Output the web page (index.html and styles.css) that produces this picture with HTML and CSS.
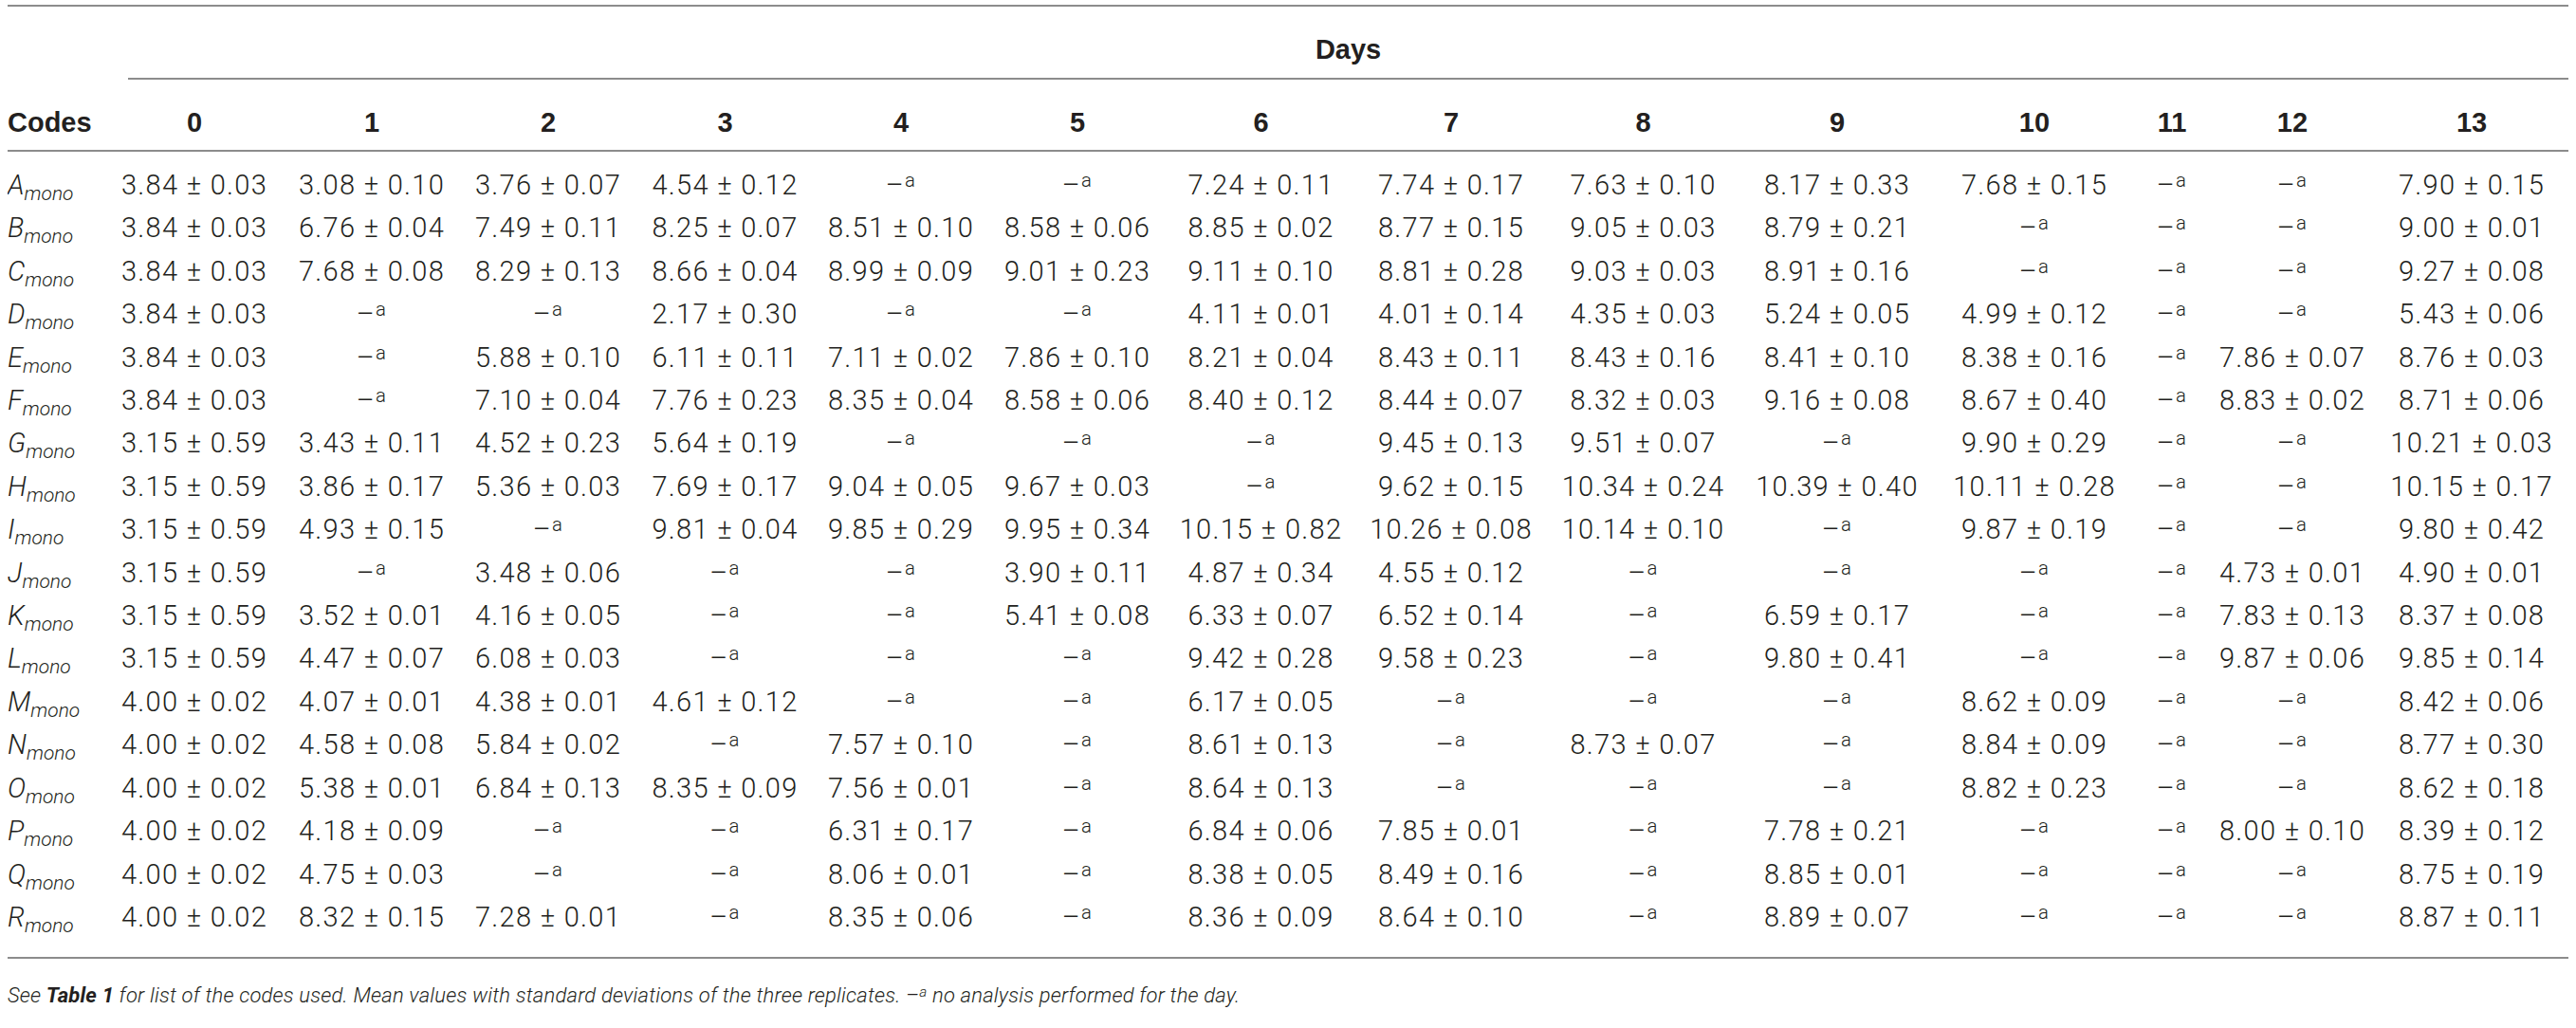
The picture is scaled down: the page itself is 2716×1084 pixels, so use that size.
FILE: index.html
```
<!DOCTYPE html>
<html lang="en">
<head>
    <meta charset="utf-8">
    <title>Mean values by day</title>
    <link rel="stylesheet" href="styles.css">
</head>
<body>
    <table class="data">
        <colgroup>
            <col class="c-code"><col class="c-0"><col class="c-1"><col class="c-2"><col class="c-3"><col class="c-4"><col class="c-5"><col class="c-6"><col class="c-7"><col class="c-8"><col class="c-9"><col class="c-10"><col class="c-11"><col class="c-12"><col class="c-13">
        </colgroup>
        <thead>
            <tr class="group-row">
                <th></th>
                <th colspan="14" class="days"><div>Days</div></th>
            </tr>
            <tr class="head-row">
                <th class="code">Codes</th>
                <th>0</th><th>1</th><th>2</th><th>3</th><th>4</th><th>5</th><th>6</th><th>7</th><th>8</th><th>9</th><th>10</th><th>11</th><th>12</th><th>13</th>
            </tr>
        </thead>
        <tbody>
            <tr>
                <td class="code">A<sub>mono</sub></td>
                <td>3.84 ± 0.03</td><td>3.08 ± 0.10</td><td>3.76 ± 0.07</td><td>4.54 ± 0.12</td><td>–<sup>a</sup></td><td>–<sup>a</sup></td><td>7.24 ± 0.11</td><td>7.74 ± 0.17</td><td>7.63 ± 0.10</td><td>8.17 ± 0.33</td><td>7.68 ± 0.15</td><td>–<sup>a</sup></td><td>–<sup>a</sup></td><td>7.90 ± 0.15</td>
            </tr>
            <tr>
                <td class="code">B<sub>mono</sub></td>
                <td>3.84 ± 0.03</td><td>6.76 ± 0.04</td><td>7.49 ± 0.11</td><td>8.25 ± 0.07</td><td>8.51 ± 0.10</td><td>8.58 ± 0.06</td><td>8.85 ± 0.02</td><td>8.77 ± 0.15</td><td>9.05 ± 0.03</td><td>8.79 ± 0.21</td><td>–<sup>a</sup></td><td>–<sup>a</sup></td><td>–<sup>a</sup></td><td>9.00 ± 0.01</td>
            </tr>
            <tr>
                <td class="code">C<sub>mono</sub></td>
                <td>3.84 ± 0.03</td><td>7.68 ± 0.08</td><td>8.29 ± 0.13</td><td>8.66 ± 0.04</td><td>8.99 ± 0.09</td><td>9.01 ± 0.23</td><td>9.11 ± 0.10</td><td>8.81 ± 0.28</td><td>9.03 ± 0.03</td><td>8.91 ± 0.16</td><td>–<sup>a</sup></td><td>–<sup>a</sup></td><td>–<sup>a</sup></td><td>9.27 ± 0.08</td>
            </tr>
            <tr>
                <td class="code">D<sub>mono</sub></td>
                <td>3.84 ± 0.03</td><td>–<sup>a</sup></td><td>–<sup>a</sup></td><td>2.17 ± 0.30</td><td>–<sup>a</sup></td><td>–<sup>a</sup></td><td>4.11 ± 0.01</td><td>4.01 ± 0.14</td><td>4.35 ± 0.03</td><td>5.24 ± 0.05</td><td>4.99 ± 0.12</td><td>–<sup>a</sup></td><td>–<sup>a</sup></td><td>5.43 ± 0.06</td>
            </tr>
            <tr>
                <td class="code">E<sub>mono</sub></td>
                <td>3.84 ± 0.03</td><td>–<sup>a</sup></td><td>5.88 ± 0.10</td><td>6.11 ± 0.11</td><td>7.11 ± 0.02</td><td>7.86 ± 0.10</td><td>8.21 ± 0.04</td><td>8.43 ± 0.11</td><td>8.43 ± 0.16</td><td>8.41 ± 0.10</td><td>8.38 ± 0.16</td><td>–<sup>a</sup></td><td>7.86 ± 0.07</td><td>8.76 ± 0.03</td>
            </tr>
            <tr>
                <td class="code">F<sub>mono</sub></td>
                <td>3.84 ± 0.03</td><td>–<sup>a</sup></td><td>7.10 ± 0.04</td><td>7.76 ± 0.23</td><td>8.35 ± 0.04</td><td>8.58 ± 0.06</td><td>8.40 ± 0.12</td><td>8.44 ± 0.07</td><td>8.32 ± 0.03</td><td>9.16 ± 0.08</td><td>8.67 ± 0.40</td><td>–<sup>a</sup></td><td>8.83 ± 0.02</td><td>8.71 ± 0.06</td>
            </tr>
            <tr>
                <td class="code">G<sub>mono</sub></td>
                <td>3.15 ± 0.59</td><td>3.43 ± 0.11</td><td>4.52 ± 0.23</td><td>5.64 ± 0.19</td><td>–<sup>a</sup></td><td>–<sup>a</sup></td><td>–<sup>a</sup></td><td>9.45 ± 0.13</td><td>9.51 ± 0.07</td><td>–<sup>a</sup></td><td>9.90 ± 0.29</td><td>–<sup>a</sup></td><td>–<sup>a</sup></td><td>10.21 ± 0.03</td>
            </tr>
            <tr>
                <td class="code">H<sub>mono</sub></td>
                <td>3.15 ± 0.59</td><td>3.86 ± 0.17</td><td>5.36 ± 0.03</td><td>7.69 ± 0.17</td><td>9.04 ± 0.05</td><td>9.67 ± 0.03</td><td>–<sup>a</sup></td><td>9.62 ± 0.15</td><td>10.34 ± 0.24</td><td>10.39 ± 0.40</td><td>10.11 ± 0.28</td><td>–<sup>a</sup></td><td>–<sup>a</sup></td><td>10.15 ± 0.17</td>
            </tr>
            <tr>
                <td class="code">I<sub>mono</sub></td>
                <td>3.15 ± 0.59</td><td>4.93 ± 0.15</td><td>–<sup>a</sup></td><td>9.81 ± 0.04</td><td>9.85 ± 0.29</td><td>9.95 ± 0.34</td><td>10.15 ± 0.82</td><td>10.26 ± 0.08</td><td>10.14 ± 0.10</td><td>–<sup>a</sup></td><td>9.87 ± 0.19</td><td>–<sup>a</sup></td><td>–<sup>a</sup></td><td>9.80 ± 0.42</td>
            </tr>
            <tr>
                <td class="code">J<sub>mono</sub></td>
                <td>3.15 ± 0.59</td><td>–<sup>a</sup></td><td>3.48 ± 0.06</td><td>–<sup>a</sup></td><td>–<sup>a</sup></td><td>3.90 ± 0.11</td><td>4.87 ± 0.34</td><td>4.55 ± 0.12</td><td>–<sup>a</sup></td><td>–<sup>a</sup></td><td>–<sup>a</sup></td><td>–<sup>a</sup></td><td>4.73 ± 0.01</td><td>4.90 ± 0.01</td>
            </tr>
            <tr>
                <td class="code">K<sub>mono</sub></td>
                <td>3.15 ± 0.59</td><td>3.52 ± 0.01</td><td>4.16 ± 0.05</td><td>–<sup>a</sup></td><td>–<sup>a</sup></td><td>5.41 ± 0.08</td><td>6.33 ± 0.07</td><td>6.52 ± 0.14</td><td>–<sup>a</sup></td><td>6.59 ± 0.17</td><td>–<sup>a</sup></td><td>–<sup>a</sup></td><td>7.83 ± 0.13</td><td>8.37 ± 0.08</td>
            </tr>
            <tr>
                <td class="code">L<sub>mono</sub></td>
                <td>3.15 ± 0.59</td><td>4.47 ± 0.07</td><td>6.08 ± 0.03</td><td>–<sup>a</sup></td><td>–<sup>a</sup></td><td>–<sup>a</sup></td><td>9.42 ± 0.28</td><td>9.58 ± 0.23</td><td>–<sup>a</sup></td><td>9.80 ± 0.41</td><td>–<sup>a</sup></td><td>–<sup>a</sup></td><td>9.87 ± 0.06</td><td>9.85 ± 0.14</td>
            </tr>
            <tr>
                <td class="code">M<sub>mono</sub></td>
                <td>4.00 ± 0.02</td><td>4.07 ± 0.01</td><td>4.38 ± 0.01</td><td>4.61 ± 0.12</td><td>–<sup>a</sup></td><td>–<sup>a</sup></td><td>6.17 ± 0.05</td><td>–<sup>a</sup></td><td>–<sup>a</sup></td><td>–<sup>a</sup></td><td>8.62 ± 0.09</td><td>–<sup>a</sup></td><td>–<sup>a</sup></td><td>8.42 ± 0.06</td>
            </tr>
            <tr>
                <td class="code">N<sub>mono</sub></td>
                <td>4.00 ± 0.02</td><td>4.58 ± 0.08</td><td>5.84 ± 0.02</td><td>–<sup>a</sup></td><td>7.57 ± 0.10</td><td>–<sup>a</sup></td><td>8.61 ± 0.13</td><td>–<sup>a</sup></td><td>8.73 ± 0.07</td><td>–<sup>a</sup></td><td>8.84 ± 0.09</td><td>–<sup>a</sup></td><td>–<sup>a</sup></td><td>8.77 ± 0.30</td>
            </tr>
            <tr>
                <td class="code">O<sub>mono</sub></td>
                <td>4.00 ± 0.02</td><td>5.38 ± 0.01</td><td>6.84 ± 0.13</td><td>8.35 ± 0.09</td><td>7.56 ± 0.01</td><td>–<sup>a</sup></td><td>8.64 ± 0.13</td><td>–<sup>a</sup></td><td>–<sup>a</sup></td><td>–<sup>a</sup></td><td>8.82 ± 0.23</td><td>–<sup>a</sup></td><td>–<sup>a</sup></td><td>8.62 ± 0.18</td>
            </tr>
            <tr>
                <td class="code">P<sub>mono</sub></td>
                <td>4.00 ± 0.02</td><td>4.18 ± 0.09</td><td>–<sup>a</sup></td><td>–<sup>a</sup></td><td>6.31 ± 0.17</td><td>–<sup>a</sup></td><td>6.84 ± 0.06</td><td>7.85 ± 0.01</td><td>–<sup>a</sup></td><td>7.78 ± 0.21</td><td>–<sup>a</sup></td><td>–<sup>a</sup></td><td>8.00 ± 0.10</td><td>8.39 ± 0.12</td>
            </tr>
            <tr>
                <td class="code">Q<sub>mono</sub></td>
                <td>4.00 ± 0.02</td><td>4.75 ± 0.03</td><td>–<sup>a</sup></td><td>–<sup>a</sup></td><td>8.06 ± 0.01</td><td>–<sup>a</sup></td><td>8.38 ± 0.05</td><td>8.49 ± 0.16</td><td>–<sup>a</sup></td><td>8.85 ± 0.01</td><td>–<sup>a</sup></td><td>–<sup>a</sup></td><td>–<sup>a</sup></td><td>8.75 ± 0.19</td>
            </tr>
            <tr>
                <td class="code">R<sub>mono</sub></td>
                <td>4.00 ± 0.02</td><td>8.32 ± 0.15</td><td>7.28 ± 0.01</td><td>–<sup>a</sup></td><td>8.35 ± 0.06</td><td>–<sup>a</sup></td><td>8.36 ± 0.09</td><td>8.64 ± 0.10</td><td>–<sup>a</sup></td><td>8.89 ± 0.07</td><td>–<sup>a</sup></td><td>–<sup>a</sup></td><td>–<sup>a</sup></td><td>8.87 ± 0.11</td>
            </tr>
        </tbody>
    </table>

    <p class="note">See <b>Table 1</b> for list of the codes used. Mean values with standard deviations of the three replicates. –<sup>a</sup> no analysis performed for the day.</p>
</body>
</html>
```

FILE: styles.css
```
html, body {
    background: #fff;
}
body {
    margin: 5px 8px 0;
    color: #231f20;
    font-family: "Roboto", "Liberation Sans", sans-serif;
    font-weight: 300;
}
.data {
    width: 2700px;
    table-layout: fixed;
    border-collapse: collapse;
    border-top: 2px solid #8c8c8c;
    border-bottom: 2px solid #8c8c8c;
}
.c-code { width: 103px; }
.c-0 { width: 188px; }
.c-1 { width: 186px; }
.c-2 { width: 186px; }
.c-3 { width: 187px; }
.c-4 { width: 184px; }
.c-5 { width: 188px; }
.c-6 { width: 199px; }
.c-7 { width: 202px; }
.c-8 { width: 203px; }
.c-9 { width: 206px; }
.c-10 { width: 210px; }
.c-11 { width: 80px; }
.c-12 { width: 174px; }
.c-13 { width: 204px; }

.data th {
    padding: 0;
    font-family: "Liberation Sans", sans-serif;
    font-weight: 700;
    font-size: 29px;
    line-height: 32px;
    text-align: center;
    color: #231f20;
}
.data .days div {
    margin-left: 24px;
    padding: 29px 0 14px;
    border-bottom: 2px solid #8c8c8c;
}
.head-row th {
    padding: 29px 0 13px;
    border-bottom: 2px solid #8c8c8c;
}
.data th.code {
    text-align: left;
}
.data td {
    padding: 0;
    font-size: 29px;
    letter-spacing: 1.3px;
    line-height: 45.4px;
    text-align: center;
    white-space: nowrap;
}
.data tbody tr:first-child td {
    padding-top: 13px;
}
.data tbody tr:last-child td {
    padding-bottom: 19px;
}
.data td.code {
    text-align: left;
    font-style: italic;
    letter-spacing: 0;
}
.data sub {
    font-size: 0.72em;
    line-height: 0;
    vertical-align: -0.28em;
}
sup {
    font-size: 0.7em;
    line-height: 0;
    vertical-align: 0.4em;
}
.note {
    margin: 24px 0 0;
    font-size: 22px;
    line-height: 30px;
    font-style: italic;
    letter-spacing: 0.2px;
}
.note b {
    font-weight: 700;
}
```
